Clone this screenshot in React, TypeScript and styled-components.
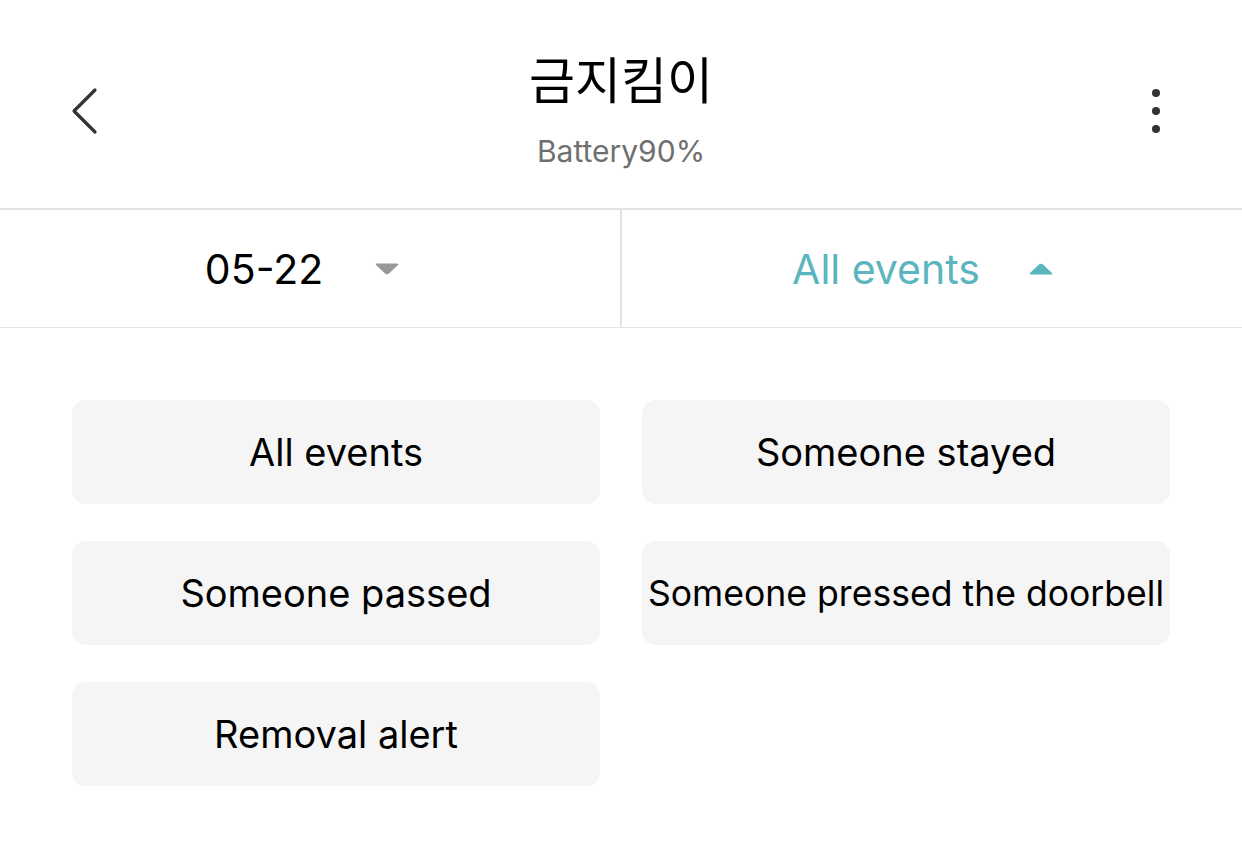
import React from "react";
import styled, { createGlobalStyle } from "styled-components";

const Global = createGlobalStyle`
  html, body { margin: 0; padding: 0; background: #ffffff; }
  body { font-family: Inter, "Noto Sans CJK KR", sans-serif; }
  * { box-sizing: border-box; }
`;

const Page = styled.div`
  width: 1242px;
  height: 846px;
  background: #fff;
  display: flex;
  flex-direction: column;
`;

const Header = styled.header`
  height: 210px;
  border-bottom: 2px solid #e3e3e3;
  display: grid;
  grid-template-columns: 140px 1fr 140px;
  align-items: start;
`;

const IconButton = styled.div<{ $align: "left" | "right" }>`
  display: flex;
  justify-content: ${(p) => (p.$align === "left" ? "flex-start" : "flex-end")};
  padding: ${(p) => (p.$align === "left" ? "86px 0 0 69px" : "86px 81px 0 0")};
`;

const TitleBlock = styled.div`
  display: flex;
  flex-direction: column;
  align-items: center;
  padding-top: 42px;
`;

const Title = styled.h1`
  margin: 0;
  font-family: "Noto Sans CJK KR", sans-serif;
  font-weight: 400;
  font-size: 50px;
  line-height: 70px;
  color: #000;
`;

const Subtitle = styled.div`
  margin-top: 21px;
  font-family: Inter, sans-serif;
  font-size: 30px;
  line-height: 36px;
  color: #6f6f6f;
`;

const FilterBar = styled.div`
  height: 118px;
  border-bottom: 1px solid #e3e3e3;
  display: grid;
  grid-template-columns: 620px 2px 1fr;
`;

const Divider = styled.div`
  background: #e3e3e3;
`;

const FilterCell = styled.div<{ $active?: boolean }>`
  display: flex;
  align-items: center;
  justify-content: center;
  gap: ${(p) => (p.$active ? "48px" : "51px")};
  color: ${(p) => (p.$active ? "#5ab5be" : "#000")};
  font-size: 41px;
  padding-right: ${(p) => (p.$active ? "18px" : "15px")};
`;

const Grid = styled.div`
  display: grid;
  grid-template-columns: 528px 528px;
  column-gap: 42px;
  row-gap: 37px;
  padding: 72px 0 0 72px;
`;

const Option = styled.div<{ $compact?: boolean }>`
  height: 104px;
  border-radius: 14px;
  background: #f5f5f5;
  display: flex;
  align-items: center;
  justify-content: center;
  font-size: ${(p) => (p.$compact ? "35.6px" : "38px")};
  color: #000;
  white-space: nowrap;
`;

const Back = () => (
  <svg width="30" height="50" viewBox="0 0 30 50">
    <path d="M26 4 L5 25 L26 46" fill="none" stroke="#333" strokeWidth="3.2" strokeLinecap="round" strokeLinejoin="round" />
  </svg>
);

const More = () => (
  <svg width="10" height="50" viewBox="0 0 10 50">
    <circle cx="5" cy="7" r="4" fill="#333" />
    <circle cx="5" cy="25" r="4" fill="#333" />
    <circle cx="5" cy="43" r="4" fill="#333" />
  </svg>
);

const Caret = ({ up, color }: { up?: boolean; color: string }) => (
  <svg width="26" height="14" viewBox="0 0 26 14">
    <path
      d={up ? "M13 2 Q14 1.5 15 2.5 L24 11 Q25 12.5 23 12.5 L3 12.5 Q1 12.5 2 11 L11 2.5 Q12 1.5 13 2Z" : "M13 12 Q14 12.5 15 11.5 L24 3 Q25 1.5 23 1.5 L3 1.5 Q1 1.5 2 3 L11 11.5 Q12 12.5 13 12Z"}
      fill={color}
    />
  </svg>
);

const options = [
  "All events",
  "Someone stayed",
  "Someone passed",
  "Someone pressed the doorbell",
  "Removal alert",
];

export default function App() {
  return (
    <Page>
      <Global />
      <Header>
        <IconButton $align="left">
          <Back />
        </IconButton>
        <TitleBlock>
          <Title>금지킴이</Title>
          <Subtitle>Battery90%</Subtitle>
        </TitleBlock>
        <IconButton $align="right">
          <More />
        </IconButton>
      </Header>
      <FilterBar>
        <FilterCell>
          <span>05-22</span>
          <Caret color="#999" />
        </FilterCell>
        <Divider />
        <FilterCell $active>
          <span>All events</span>
          <Caret up color="#5ab5be" />
        </FilterCell>
      </FilterBar>
      <Grid>
        {options.map((o) => (
          <Option key={o} $compact={o.length > 20}>
            {o}
          </Option>
        ))}
      </Grid>
    </Page>
  );
}
